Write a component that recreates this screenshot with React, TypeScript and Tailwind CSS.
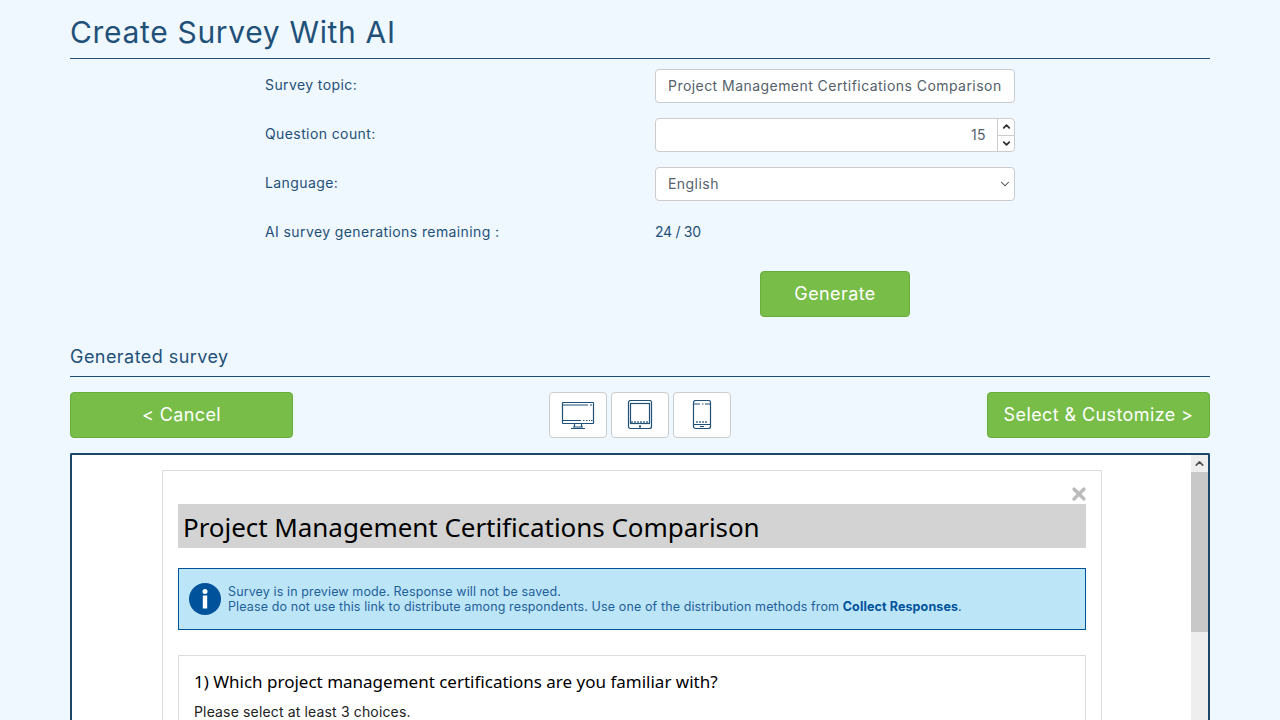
import { ChevronDown, ChevronUp, X } from "lucide-react";

const FONT = "font-['Inter','Open_Sans',sans-serif]";

const Row = ({ label, children }: { label: string; children: React.ReactNode }) => (
  <div className="flex h-[34px] items-center">
    <label className="w-[390px] -mt-1 text-[14px] tracking-[0.4px] text-[#1f5178]">{label}</label>
    <div className="w-[360px]">{children}</div>
  </div>
);

const inputClass =
  "block w-full h-[34px] rounded border border-[#cccccc] bg-white text-[14px] tracking-[0.45px] text-[#555f6b] outline-none";

const DesktopIcon = () => (
  <svg width="34" height="28" viewBox="0 0 34 28" fill="none" stroke="#1f5178" strokeWidth="1.200">
    <rect x="1.500" y="1.500" width="31" height="21" rx="0.500" />
    <path d="M2 4h25M29 4h2M2 19.500h18M22 19.500h1.500M25 19.500h1.500M28 19.500h1M30 19.500h1.500" />
    <path d="M13.500 23v3M20.500 23v3M10 27.500h14M12 26h10" />
  </svg>
);

const TabletIcon = () => (
  <svg width="26" height="30" viewBox="0 0 26 30" fill="none" stroke="#1f5178" strokeWidth="1.200">
    <rect x="1.500" y="0.500" width="23" height="28" rx="2" />
    <rect x="3.500" y="3.500" width="19" height="20" />
    <path d="M5 21v2M8 21v2M11 21v2M14 21v2M17 21v2M20 21v2" />
    <rect x="12" y="25.500" width="2" height="2" fill="#1f5178" stroke="none" />
  </svg>
);

const PhoneIcon = () => (
  <svg width="20" height="30" viewBox="0 0 20 30" fill="none" stroke="#1f5178" strokeWidth="1.200">
    <rect x="1.500" y="0.500" width="17" height="28" rx="2" />
    <path d="M2 4h6M10 4h1.500M13 4h5M2 24.500h16M5 21v2M8 21v2M11 21v2M14 21v2M8 26.500h4" />
  </svg>
);

const GreenButton = ({ className, children }: { className: string; children: React.ReactNode }) => (
  <button className={`${className} h-[46px] rounded border border-[#68ad3e] bg-[#77bd48] pb-0.5 text-[18px] tracking-[0.4px] text-white`}>
    {children}
  </button>
);

const DeviceButton = ({ children }: { children: React.ReactNode }) => (
  <button className="flex h-[46px] w-[58px] items-center justify-center rounded border border-[#cccccc] bg-white">
    {children}
  </button>
);

const Preview = () => (
  <div className="flex h-[300px] overflow-hidden rounded-t-[2px] border-2 border-b-0 border-[#1d4668] bg-white">
    <div className="flex-1 pl-[90px] pr-[89px] pt-[15px]">
      <div className="relative h-[300px] border border-[#dddddd] px-[15px] pt-[33px]">
        <X className="absolute right-[12px] top-[13px] text-[#bbbbbb]" size={20} strokeWidth={4} />
        <h2 className="h-[44px] bg-[#d3d3d3] px-[5px] font-['Noto_Sans',sans-serif] text-[26px] leading-[46px] tracking-[-0.05px] text-black">
          Project Management Certifications Comparison
        </h2>
        <div className="mt-5 flex h-[62px] items-center gap-[7px] border border-[#00529b] bg-[#bde5f8] pl-[10px] text-[12.500px] leading-[15px] tracking-[0.12px] text-[#1d5f99]">
          <svg width="32" height="32" viewBox="0 0 32 32" className="shrink-0">
            <circle cx="16" cy="16" r="16" fill="#00529b" />
            <circle cx="16" cy="8.500" r="2.500" fill="#fff" />
            <rect x="13.800" y="12.500" width="4.400" height="13" fill="#fff" />
          </svg>
          <div>
            Survey is in preview mode. Response will not be saved.
            <br />
            Please do not use this link to distribute among respondents. Use one of the distribution methods from{" "}
            <b className="text-[#00529b]">Collect Responses</b>.
          </div>
        </div>
        <div className="mt-[25px] border border-[#dddddd] px-[15px] pt-[13px]">
          <p className="font-['Noto_Sans',sans-serif] text-[17px] leading-[26px] text-black">
            1) Which project management certifications are you familiar with?
          </p>
          <p className="mt-[7px] text-[14px] leading-5 tracking-[0.15px] text-[#222222]">
            Please select at least 3 choices.
          </p>
        </div>
      </div>
    </div>
    <div className="flex w-[17px] shrink-0 flex-col bg-[#eeeeee]">
      <div className="flex h-[17px] items-center justify-center">
        <ChevronUp size={13} strokeWidth={3} className="text-[#505050]" />
      </div>
      <div className="h-[160px] bg-[#c8c8c8]" />
    </div>
  </div>
);

export default function App() {
  return (
    <div className={`${FONT} h-[720px] overflow-hidden bg-[#eff7ff]`}>
      <div className="mx-auto w-[1140px]">
        <h1 className="h-[59px] border-b border-[#1f5178] pt-[12px] text-[30px] leading-10 tracking-[0.67px] text-[#1f5178]">
          Create Survey With AI
        </h1>
        <div className="mt-[10px] flex flex-col gap-[15px] pl-[195px]">
          <Row label="Survey topic:">
            <input
              readOnly
              value="Project Management Certifications Comparison"
              className={`${inputClass} px-3 pb-0.5`}
            />
          </Row>
          <Row label="Question count:">
            <div className={`${inputClass} flex`}>
              <div className="flex-1 pr-[11px] text-right leading-[32px]">15</div>
              <div className="flex w-[17px] flex-col border-l border-[#cccccc]">
                <div className="flex flex-1 items-center justify-center border-b border-[#cccccc]">
                  <ChevronUp size={11} strokeWidth={4} className="text-[#333333]" />
                </div>
                <div className="flex flex-1 items-center justify-center">
                  <ChevronDown size={11} strokeWidth={4} className="text-[#333333]" />
                </div>
              </div>
            </div>
          </Row>
          <Row label="Language:">
            <div className="relative">
              <select className={`${inputClass} appearance-none px-3 pb-0.5`} defaultValue="English">
                <option>English</option>
              </select>
              <ChevronDown
                size={14}
                strokeWidth={1.800}
                className="pointer-events-none absolute right-[3px] top-[10px] text-[#444444]"
              />
            </div>
          </Row>
          <Row label="AI survey generations remaining :">
            <span className="-mt-1 block text-[14px] tracking-[-0.3px] text-[#1f5178]">24 / 30</span>
          </Row>
        </div>
        <div className="mt-[21px] flex pl-[690px]">
          <GreenButton className="w-[150px]">Generate</GreenButton>
        </div>
        <h2 className="mt-[26px] h-[34px] border-b border-[#1f5178] text-[18px] leading-[28px] tracking-[0.45px] text-[#1f5178]">
          Generated survey
        </h2>
        <div className="mt-[15px] flex items-center justify-between">
          <GreenButton className="w-[223px]">&lt; Cancel</GreenButton>
          <div className="flex gap-1">
            <DeviceButton>
              <DesktopIcon />
            </DeviceButton>
            <DeviceButton>
              <TabletIcon />
            </DeviceButton>
            <DeviceButton>
              <PhoneIcon />
            </DeviceButton>
          </div>
          <GreenButton className="w-[223px]">Select &amp; Customize &gt;</GreenButton>
        </div>
        <div className="mt-[15px]">
          <Preview />
        </div>
      </div>
    </div>
  );
}
